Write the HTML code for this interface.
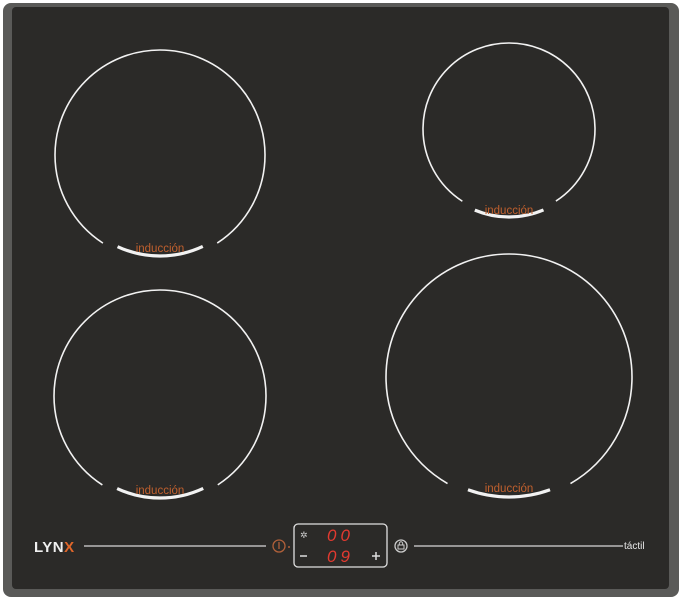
<!DOCTYPE html>
<html><head><meta charset="utf-8"><style>
html,body{margin:0;padding:0;background:#fff;width:682px;height:600px;overflow:hidden}
</style></head><body>
<svg width="682" height="600" viewBox="0 0 682 600" xmlns="http://www.w3.org/2000/svg" style="display:block">
<rect x="3" y="3" width="676" height="594" rx="8" fill="#5a5a58"/>
<rect x="12" y="7" width="657" height="582" rx="4" fill="#2b2a28"/>
<g fill="none" stroke="#f2f2f2">
<circle cx="160" cy="155" r="105" pathLength="360" stroke-width="1.6" stroke-dasharray="57 66 237 0"/>
<circle cx="160" cy="155" r="101" pathLength="360" stroke-width="3.2" stroke-dasharray="0 65 50 245"/>
<circle cx="160" cy="396" r="106" pathLength="360" stroke-width="1.6" stroke-dasharray="57 66 237 0"/>
<circle cx="160" cy="396" r="102" pathLength="360" stroke-width="3.2" stroke-dasharray="0 65 50 245"/>
<circle cx="509" cy="129" r="86" pathLength="360" stroke-width="1.6" stroke-dasharray="57 66 237 0"/>
<circle cx="509" cy="129" r="88" pathLength="360" stroke-width="3.2" stroke-dasharray="0 67 46 247"/>
<circle cx="509" cy="377" r="123" pathLength="360" stroke-width="1.6" stroke-dasharray="60 60 240 0"/>
<circle cx="509" cy="377" r="120" pathLength="360" stroke-width="3.2" stroke-dasharray="0 70 40 250"/>
</g>
<g font-family="Liberation Sans, sans-serif" font-size="11.5" fill="#c0602e" text-anchor="middle">
<text x="160" y="252">inducción</text>
<text x="160" y="494">inducción</text>
<text x="509" y="214">inducción</text>
<text x="509" y="492">inducción</text>
</g>
<text x="34" y="552" font-family="Liberation Sans, sans-serif" font-size="15" font-weight="bold" fill="#f0f0f0" letter-spacing="0.5">LYN<tspan fill="#e0662a">X</tspan></text>
<line x1="84" y1="546" x2="266" y2="546" stroke="#d8d8d8" stroke-width="1.3"/>
<line x1="414" y1="546" x2="623" y2="546" stroke="#d8d8d8" stroke-width="1.3"/>
<text x="624" y="549" font-family="Liberation Sans, sans-serif" font-size="10" fill="#e8e8e8">táctil</text>
<circle cx="279" cy="546" r="6" fill="none" stroke="#b0603a" stroke-width="1.3"/>
<line x1="279" y1="542" x2="279" y2="549" stroke="#b0603a" stroke-width="1.3"/>
<circle cx="289" cy="547" r="1" fill="#b0603a"/>
<rect x="294" y="524" width="93" height="43" rx="4" fill="none" stroke="#e0e0e0" stroke-width="1.3"/>
<text x="300" y="538" font-family="DejaVu Sans, sans-serif" font-size="9" fill="#ccc">✲</text>
<text x="327" y="541" font-family="Liberation Sans, sans-serif" font-size="17" font-style="italic" fill="#e23a30" letter-spacing="4">00</text>
<text x="327" y="562" font-family="Liberation Sans, sans-serif" font-size="17" font-style="italic" fill="#e23a30" letter-spacing="4">09</text>
<line x1="300" y1="556" x2="307" y2="556" stroke="#ddd" stroke-width="1.5"/>
<line x1="372" y1="556" x2="380" y2="556" stroke="#ddd" stroke-width="1.5"/>
<line x1="376" y1="552" x2="376" y2="560" stroke="#ddd" stroke-width="1.5"/>
<circle cx="401" cy="546" r="6" fill="none" stroke="#ccc" stroke-width="1.3"/>
<rect x="398" y="545" width="6" height="4" fill="none" stroke="#ccc" stroke-width="1"/>
<path d="M399.3 545v-1.5a1.7 1.7 0 0 1 3.4 0V545" fill="none" stroke="#ccc" stroke-width="1"/>
</svg>
</body></html>
